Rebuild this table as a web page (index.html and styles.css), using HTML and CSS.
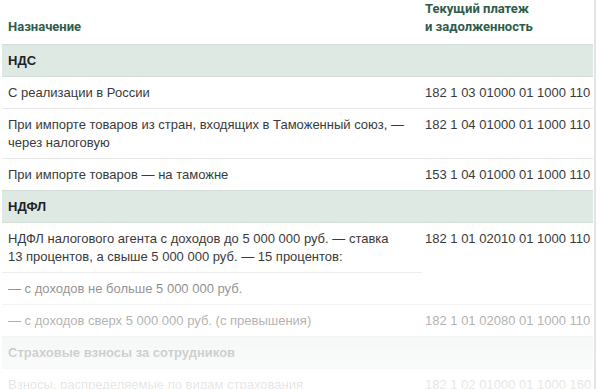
FILE: index.html
```html
<!DOCTYPE html>
<html lang="ru">
<head>
<meta charset="utf-8">
<link rel="stylesheet" href="styles.css">
</head>
<body>
<div class="wrap">
  <table class="kbk">
    <colgroup>
      <col class="col-name">
      <col class="col-code">
    </colgroup>
    <thead>
      <tr>
        <th class="c-name">Назначение</th>
        <th class="c-code">Текущий платеж<br>и задолженность</th>
      </tr>
    </thead>
    <tbody>
      <tr class="group"><td colspan="2">НДС</td></tr>
      <tr><td class="c-name">С реализации в России</td><td class="c-code">182 1 03 01000 01 1000 110</td></tr>
      <tr><td class="c-name">При импорте товаров из стран, входящих в Таможенный союз, —<br>через налоговую</td><td class="c-code">182 1 04 01000 01 1000 110</td></tr>
      <tr><td class="c-name">При импорте товаров — на таможне</td><td class="c-code">153 1 04 01000 01 1000 110</td></tr>
      <tr class="group"><td colspan="2">НДФЛ</td></tr>
      <tr><td class="c-name">НДФЛ налогового агента с доходов до 5 000 000 руб. — ставка<br>13 процентов, а свыше 5 000 000 руб. — 15 процентов:</td><td class="c-code" rowspan="2">182 1 01 02010 01 1000 110</td></tr>
      <tr><td class="c-name">— с доходов не больше 5 000 000 руб.</td></tr>
      <tr><td class="c-name">— с доходов сверх 5 000 000 руб. (с превышения)</td><td class="c-code">182 1 01 02080 01 1000 110</td></tr>
      <tr class="group"><td colspan="2">Страховые взносы за сотрудников</td></tr>
      <tr><td class="c-name">Взносы, распределяемые по видам страхования</td><td class="c-code">182 1 02 01000 01 1000 160</td></tr>
    </tbody>
  </table>
  <div class="fade"></div>
</div>
</body>
</html>
```

FILE: styles.css
```css
html, body {
  margin: 0;
  padding: 0;
  background: #fff;
  overflow: hidden;
}
.wrap {
  position: relative;
  width: 594px;
  height: 389px;
  border-right: 2px solid #e4e4e4;
  overflow: hidden;
}
.kbk {
  border-collapse: collapse;
  table-layout: fixed;
  margin-left: 2px;
  width: 591px;
  font-family: "Liberation Sans", Arial, sans-serif;
  font-size: 13px;
  line-height: 18px;
  color: #3a3a3a;
}
.col-name {
  width: 420px;
}
.kbk th {
  font-family: Roboto, "Liberation Sans", sans-serif;
  font-weight: bold;
  font-size: 13px;
  color: #2e5c4b;
  text-align: left;
  vertical-align: bottom;
  padding: 0 6px 8px 6px;
  height: 32px;
}
.kbk th.c-code {
  padding-left: 3px;
  padding-right: 0;
}
.kbk td {
  padding: 7px 6px 6px 6px;
  vertical-align: top;
  border-top: 1px solid #e8e8e8;
}
.kbk td.c-code {
  padding-left: 3px;
  padding-right: 0;
  white-space: nowrap;
}
.kbk tr.group td {
  background: #dfe9e4;
  font-family: "Liberation Sans", Arial, sans-serif;
  font-weight: bold;
  font-size: 13px;
  color: #222;
  padding: 7px 6px 6px 6px;
  border-top: 1px solid #d3ddd8;
  border-bottom: 1px solid #d3ddd8;
}
.fade {
  position: absolute;
  left: 0;
  right: 0;
  bottom: 0;
  height: 127px;
  background: linear-gradient(to bottom,
    rgba(255,255,255,0) 0%,
    rgba(255,255,255,0.45) 21%,
    rgba(255,255,255,0.6) 46%,
    rgba(255,255,255,0.78) 72%,
    rgba(255,255,255,0.88) 100%);
  pointer-events: none;
}
```
